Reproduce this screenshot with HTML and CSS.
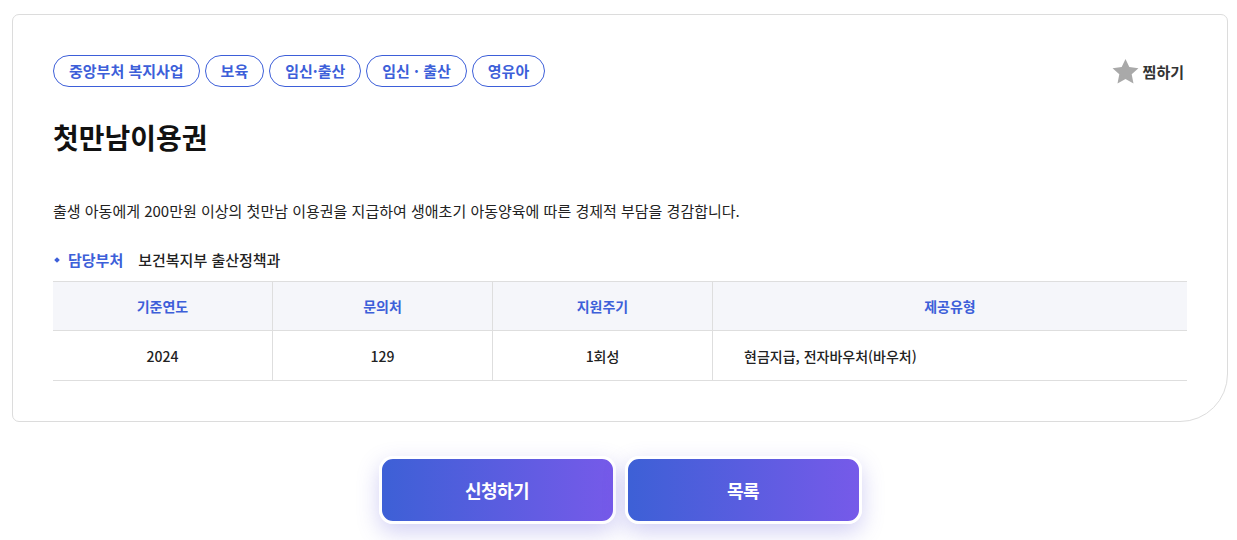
FILE: index.html
```html
<!DOCTYPE html>
<html lang="ko">
<head>
    <meta charset="UTF-8">
    <title>첫만남이용권</title>
    <link rel="stylesheet" href="styles.css">
</head>
<body>

    <div class="page">
        <div class="card">
            <div class="card-top">
                <ul class="tags">
                    <li>중앙부처 복지사업</li>
                    <li>보육</li>
                    <li>임신·출산</li>
                    <li>임신 · 출산</li>
                    <li>영유아</li>
                </ul>
                <button class="bookmark">
                    <svg width="27" height="27" viewBox="0 0 24 24"><path d="M12 0.8L15.4 8.1 23.5 9 17.5 14.5 19.1 22.6 12 18.6 4.9 22.6 6.5 14.5 0.5 9 8.6 8.1Z" fill="#a9a9a9"/></svg>
                    찜하기
                </button>
            </div>

            <h1 class="title">첫만남이용권</h1>

            <p class="desc">출생 아동에게 200만원 이상의 첫만남 이용권을 지급하여 생애초기 아동양육에 따른 경제적 부담을 경감합니다.</p>

            <div class="dept">
                <span class="dept-label">담당부처</span>
                <span class="dept-name">보건복지부 출산정책과</span>
            </div>

            <table class="info">
                <thead>
                    <tr>
                        <th class="col">기준연도</th>
                        <th class="col">문의처</th>
                        <th class="col">지원주기</th>
                        <th>제공유형</th>
                    </tr>
                </thead>
                <tbody>
                    <tr>
                        <td>2024</td>
                        <td>129</td>
                        <td>1회성</td>
                        <td class="left">현금지급, 전자바우처(바우처)</td>
                    </tr>
                </tbody>
            </table>
        </div>

        <div class="actions">
            <button class="btn">신청하기</button>
            <button class="btn">목록</button>
        </div>
    </div>

</body>
</html>
```

FILE: styles.css
```css
body {
    margin: 0;
    font-family: "Noto Sans CJK KR", "Noto Sans", sans-serif;
    background-color: #fff;
    color: #222;
}
.page {
    padding: 14px 9px 40px 12px;
}
.card {
    border: 1px solid #dcdcdc;
    border-radius: 7px 7px 48px 7px;
    padding: 40px;
}
.card-top {
    display: flex;
    justify-content: space-between;
    align-items: center;
}
.tags {
    display: flex;
    gap: 5px;
    list-style: none;
    margin: 0;
    padding: 0;
}
.tags li {
    height: 30px;
    line-height: 30px;
    padding: 0 15px;
    border: 1px solid #3d5fd9;
    border-radius: 16px;
    color: #3d5fd9;
    font-size: 15px;
    font-weight: 700;
}
.bookmark {
    display: flex;
    align-items: center;
    gap: 4px;
    margin-right: 3px;
    border: none;
    background: none;
    padding: 0;
    font-family: inherit;
    font-size: 15px;
    font-weight: 700;
    color: #333;
}
.title {
    margin: 30px 0 0;
    font-size: 28px;
    line-height: 40px;
    font-weight: 700;
    color: #111;
}
.desc {
    margin: 43px 0 0;
    font-size: 15px;
    line-height: 22px;
    color: #222;
}
.dept {
    margin-top: 27px;
    display: flex;
    align-items: center;
    font-size: 15px;
    line-height: 22px;
    font-weight: 700;
}
.dept-label {
    position: relative;
    padding-left: 15px;
    color: #3d5fd9;
    margin-right: 15px;
}
.dept-label::before {
    content: "";
    position: absolute;
    left: 2px;
    top: 9px;
    width: 4px;
    height: 4px;
    background: #3d5fd9;
    transform: rotate(45deg);
}
.dept-name {
    color: #222;
    font-weight: 500;
}
.info {
    width: 100%;
    margin-top: 10px;
    border-collapse: collapse;
    font-size: 14px;
}
.info th, .info td {
    border-top: 1px solid #dedede;
    border-bottom: 1px solid #dedede;
    border-left: 1px solid #dedede;
    text-align: center;
    padding: 0;
}
.info th:first-child, .info td:first-child {
    border-left: none;
}
.info th {
    height: 48px;
    background: #f5f6fa;
    color: #3d5fd9;
    font-weight: 700;
}
.info td {
    height: 49px;
    color: #222;
    font-weight: 500;
}
.info .col {
    width: 219px;
}
.info td.left {
    text-align: left;
    padding-left: 31px;
}
.actions {
    display: flex;
    justify-content: center;
    gap: 9px;
    margin-top: 34px;
}
.btn {
    width: 237px;
    height: 68px;
    border: 3px solid #fff;
    border-radius: 14px;
    background: linear-gradient(90deg, #3d60d6, #765ae9);
    box-shadow: 0 8px 22px rgba(95, 85, 215, 0.28);
    color: #fff;
    font-family: inherit;
    font-size: 18px;
    font-weight: 700;
    letter-spacing: -0.5px;
    cursor: pointer;
}
```
